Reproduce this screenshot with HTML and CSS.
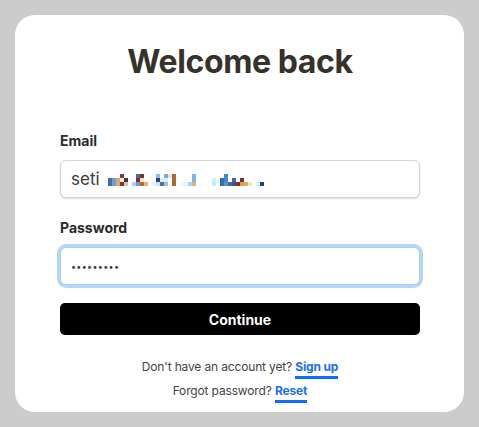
FILE: index.html
```html
<!DOCTYPE html>
<html lang="en">
<head>
    <meta charset="UTF-8">
    <meta name="viewport" content="width=device-width, initial-scale=1.0">
    <title>Sign in</title>
    <link rel="stylesheet" href="styles.css">
</head>
<body>
    <div class="card">
        <h1>Welcome back</h1>

        <form class="login">
            <label class="field-label" for="email">Email</label>
            <div class="text-input email-box" id="email">
                <span>seti</span>
                <!-- redacted part of the address -->
                <svg class="blur" width="160" height="12" viewBox="0 0 160 12">
                    <rect x="12" y="0" width="4" height="4" fill="#8a3a28"/>
                    <rect x="28" y="0" width="4" height="4" fill="#3f6fb0"/>
                    <rect x="32" y="0" width="4" height="4" fill="#7a3328"/>
                    <rect x="48" y="0" width="4" height="4" fill="#8ec0ee"/>
                    <rect x="56" y="0" width="4" height="4" fill="#9aa4a8"/>
                    <rect x="60" y="0" width="4" height="4" fill="#d8ecf5"/>
                    <rect x="64" y="0" width="4" height="4" fill="#b06a30"/>
                    <rect x="84" y="0" width="4" height="4" fill="#7ab4ea"/>
                    <rect x="116" y="0" width="4" height="4" fill="#3a8ad8"/>

                    <rect x="0" y="4" width="4" height="4" fill="#3d6fb2"/>
                    <rect x="4" y="4" width="4" height="4" fill="#6aa0d8"/>
                    <rect x="8" y="4" width="4" height="4" fill="#e0a868"/>
                    <rect x="16" y="4" width="4" height="4" fill="#5a3020"/>
                    <rect x="28" y="4" width="4" height="4" fill="#8a2a20"/>
                    <rect x="32" y="4" width="4" height="4" fill="#f5e6c0"/>
                    <rect x="48" y="4" width="4" height="4" fill="#2e3e8e"/>
                    <rect x="52" y="4" width="4" height="4" fill="#d6f0fa"/>
                    <rect x="56" y="4" width="4" height="4" fill="#d8eef8"/>
                    <rect x="64" y="4" width="4" height="4" fill="#b06a30"/>
                    <rect x="76" y="4" width="4" height="4" fill="#fffbe8"/>
                    <rect x="84" y="4" width="4" height="4" fill="#7ab4ea"/>
                    <rect x="104" y="4" width="4" height="4" fill="#c8f4fc"/>
                    <rect x="112" y="4" width="4" height="4" fill="#3a6ab0"/>
                    <rect x="116" y="4" width="4" height="4" fill="#3a8ad8"/>
                    <rect x="124" y="4" width="4" height="4" fill="#3a6ab0"/>
                    <rect x="132" y="4" width="4" height="4" fill="#7a3030"/>

                    <rect x="0" y="8" width="4" height="4" fill="#3d6fb2"/>
                    <rect x="4" y="8" width="4" height="4" fill="#6aa0d8"/>
                    <rect x="8" y="8" width="4" height="4" fill="#e0a868"/>
                    <rect x="12" y="8" width="4" height="4" fill="#8a3028"/>
                    <rect x="16" y="8" width="4" height="4" fill="#c8c8c8"/>
                    <rect x="24" y="8" width="4" height="4" fill="#a8d0f0"/>
                    <rect x="28" y="8" width="4" height="4" fill="#6a9ad0"/>
                    <rect x="32" y="8" width="4" height="4" fill="#b06a30"/>
                    <rect x="36" y="8" width="4" height="4" fill="#e0b080"/>
                    <rect x="44" y="8" width="4" height="4" fill="#e8f4fa"/>
                    <rect x="48" y="8" width="4" height="4" fill="#d0e4f0"/>
                    <rect x="52" y="8" width="4" height="4" fill="#5a7090"/>
                    <rect x="56" y="8" width="4" height="4" fill="#a8c0d8"/>
                    <rect x="64" y="8" width="4" height="4" fill="#b06a30"/>
                    <rect x="72" y="8" width="4" height="4" fill="#f0f8fc"/>
                    <rect x="76" y="8" width="4" height="4" fill="#e8f0fa"/>
                    <rect x="80" y="8" width="4" height="4" fill="#a8d4f8"/>
                    <rect x="84" y="8" width="4" height="4" fill="#e8b070"/>
                    <rect x="104" y="8" width="4" height="4" fill="#b8f0fc"/>
                    <rect x="112" y="8" width="4" height="4" fill="#3a6ab0"/>
                    <rect x="116" y="8" width="4" height="4" fill="#5a90d0"/>
                    <rect x="120" y="8" width="4" height="4" fill="#3a6ab0"/>
                    <rect x="124" y="8" width="4" height="4" fill="#505070"/>
                    <rect x="128" y="8" width="4" height="4" fill="#7a3030"/>
                    <rect x="132" y="8" width="4" height="4" fill="#d8a050"/>
                    <rect x="136" y="8" width="4" height="4" fill="#e0a860"/>
                    <rect x="140" y="8" width="4" height="4" fill="#f5e0b8"/>
                    <rect x="148" y="8" width="4" height="4" fill="#cdf6fc"/>
                    <rect x="152" y="8" width="4" height="4" fill="#2e3a80"/>
                </svg>
            </div>

            <label class="field-label" for="password">Password</label>
            <input class="text-input focused" type="password" id="password" value="secret123">

            <button type="button" class="continue">Continue</button>
        </form>

        <div class="links">
            <p>Don't have an account yet? <a href="#">Sign up</a></p>
            <p>Forgot password? <a href="#">Reset</a></p>
        </div>
    </div>
</body>
</html>
```

FILE: styles.css
```css
html{
    background-color: #cccccc;
}
body{
    margin: 15px;
    font-family: Inter, "Liberation Sans", sans-serif;
    color: #2b2b2b;
}
.card{
    background-color: #ffffff;
    border-radius: 20px;
    padding: 27px 44px 9px 45px;
}
h1{
    margin: 0;
    font-size: 32px;
    line-height: 40px;
    font-weight: 700;
    letter-spacing: -0.4px;
    text-align: center;
    color: #35322b;
}

.login{
    display: flex;
    flex-direction: column;
    margin-top: 49px;
}
.field-label{
    font-size: 14px;
    line-height: 20px;
    font-weight: 700;
    margin-bottom: 9px;
}
.text-input{
    box-sizing: border-box;
    height: 38px;
    width: 100%;
    padding: 0 10px;
    border: 1px solid #d4d4d4;
    border-radius: 6px;
    background: #ffffff;
    font-family: inherit;
    font-size: 17px;
    color: #3a3a3a;
    box-shadow: 0 1px 2px rgba(0, 0, 0, 0.15);
    margin-bottom: 20px;
}
.email-box{
    display: flex;
    align-items: center;
    gap: 8px;
}
.email-box .blur{
    margin-top: 2px;
}
.text-input.focused{
    outline: none;
    border-color: #a9cdf7;
    box-shadow: 0 0 0 3px #b7d6fb;
    letter-spacing: 0.3px;
    font-size: 9px;
    margin-bottom: 18px;
}
.continue{
    height: 32px;
    width: 100%;
    border: none;
    border-radius: 5px;
    background-color: #000000;
    color: #ffffff;
    font-family: inherit;
    font-size: 14px;
    font-weight: 700;
}

.links{
    margin-top: 20px;
    text-align: center;
    font-size: 12px;
    letter-spacing: -0.15px;
    color: #444444;

    p{
        margin: 0;
        line-height: 24px;
    }
    a{
        color: #1a6ff2;
        font-weight: 700;
        text-decoration: none;
        border-bottom: 3px solid #0b6cff;
        padding-bottom: 2px;
    }
}
```
